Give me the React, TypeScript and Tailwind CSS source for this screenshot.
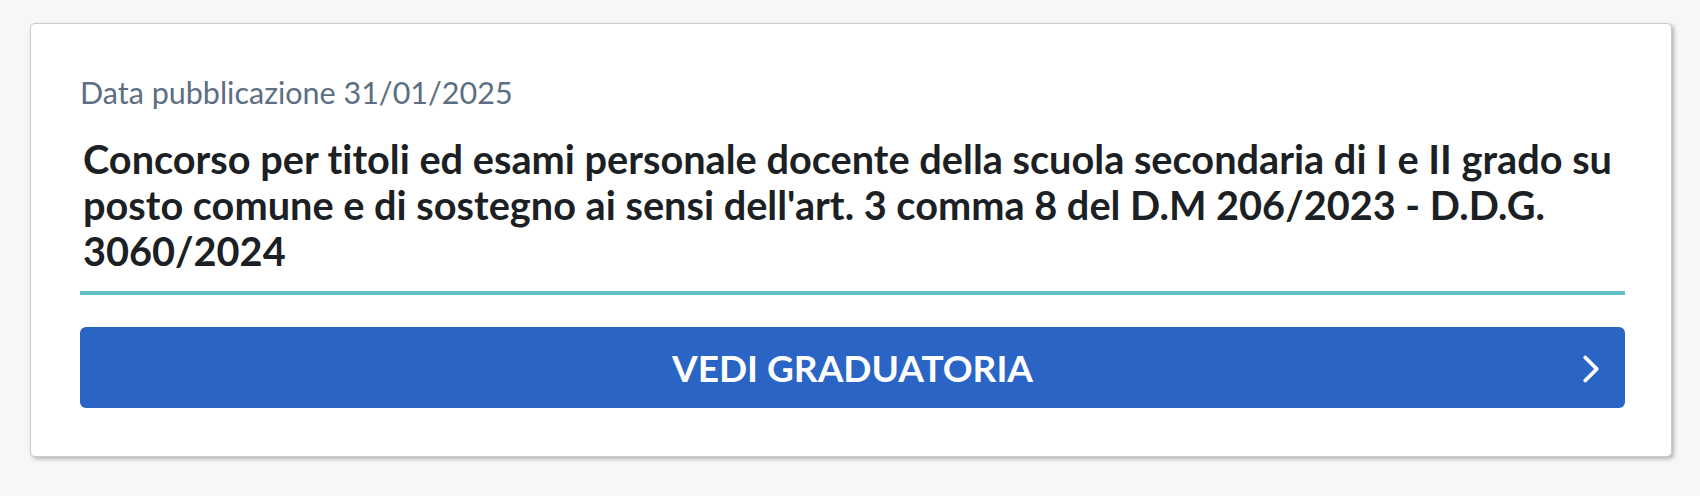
import { ChevronRight } from 'lucide-react';

// card with publication date, title and the link button
export default function App() {
    return (
        <div className="min-h-[496px] bg-[#f7f7f7] pt-[23px] pl-[30px] pr-[28px] font-['Lato',sans-serif] [font-variant-ligatures:none]">
            <div className="bg-white border border-[#cbcbcb] rounded-[5px] shadow-[2px_2px_4px_rgba(0,0,0,0.28)] pt-[51px] pb-[48px] pl-[49px] pr-[46px]">
                <p className="text-[30.5px] leading-[34px] text-[#5c6f82]">
                    Data pubblicazione 31/01/2025
                </p>
                <h2 className="mt-[27px] text-[39.7px] leading-[46px] font-bold text-[#1c1f24] pl-[3px]">
                    Concorso per titoli ed esami personale docente della scuola secondaria di I e II grado su posto comune e di sostegno ai sensi dell'art. 3 comma 8 del D.M 206/2023 - D.D.G. 3060/2024
                </h2>
                <div className="mt-[17px] h-[4px] bg-[#62bfc5]" />
                <button
                    type="button"
                    className="mt-[32px] h-[81px] w-full rounded-[6px] bg-[#2a65c6] text-white relative flex items-center justify-center"
                >
                    <span className="text-[37px] font-bold">VEDI GRADUATORIA</span>
                    <ChevronRight className="absolute right-[11px] top-[19px] w-[46px] h-[46px]" strokeWidth={2} />
                </button>
            </div>
        </div>
    );
}
